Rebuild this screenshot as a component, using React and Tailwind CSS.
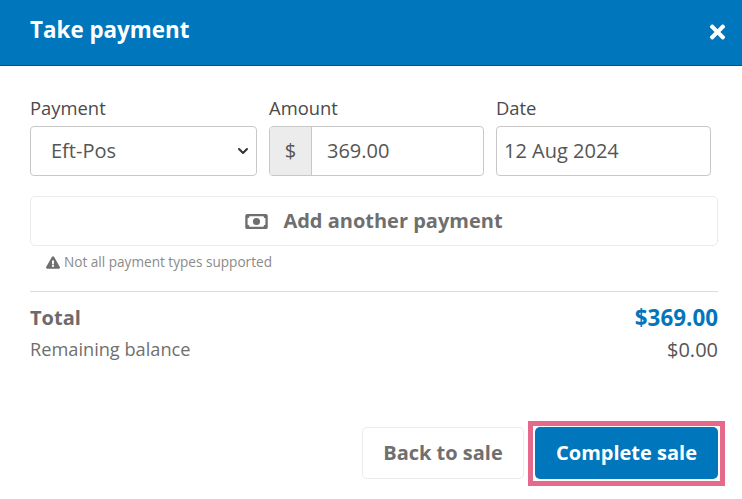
import React from 'react';
import { FaTimes, FaExclamationTriangle } from 'react-icons/fa';
import { HiChevronDown } from 'react-icons/hi';

const MoneyIcon = () => (
  <svg viewBox="0 0 24 16" className="w-[23px] h-[15px] text-[#6f6f6f]" fill="currentColor">
    <path fillRule="evenodd" d="M2 0h20a2 2 0 0 1 2 2v12a2 2 0 0 1-2 2H2a2 2 0 0 1-2-2V2a2 2 0 0 1 2-2zm2.500 2.500A2 2 0 0 1 2.500 4.500v7a2 2 0 0 1 2 2h15a2 2 0 0 1 2-2v-7a2 2 0 0 1-2-2h-15z" />
    <circle cx="12" cy="8" r="3.800" />
  </svg>
);

const App = () => {
  return (
    <div className="w-[742px] h-[499px] bg-white overflow-hidden font-['Open_Sans',sans-serif]">
      {/* Header */}
      <div className="h-[66px] bg-[#0076bd] border-b border-[#0a5080] pl-[30px] pr-[14px] flex items-start justify-between">
        <h1 className="mt-[13px] text-[22.4px] leading-[33px] font-bold text-white">Take payment</h1>
        <FaTimes className="mt-[21px] w-[21px] h-[22px] text-white" />
      </div>

      <div className="px-[24px] pl-[30px] pt-[30px]">
        {/* Fields */}
        <div className="flex gap-[12px]">
          <div className="w-[227px]">
            <label className="block h-[30px] text-[18.4px] leading-[24px] font-medium text-[#4a4a4a]">Payment</label>
            <div className="h-[50px] border border-[#c8c8c8] rounded-[4px] pl-[20px] pr-[3px] flex items-center justify-between text-[20px] text-[#555555]">
              <span>Eft-Pos</span>
              <HiChevronDown className="w-[20px] h-[20px] text-[#333333]" />
            </div>
          </div>
          <div className="w-[215px]">
            <label className="block h-[30px] text-[18.4px] leading-[24px] font-medium text-[#4a4a4a]">Amount</label>
            <div className="h-[50px] border border-[#c8c8c8] rounded-[4px] flex items-center text-[20px] text-[#555555] overflow-hidden">
              <span className="w-[42px] h-full bg-[#ececec] border-r border-[#c8c8c8] flex items-center justify-center">$</span>
              <span className="pl-[15px]">369.00</span>
            </div>
          </div>
          <div className="w-[215px]">
            <label className="block h-[30px] text-[18.4px] leading-[24px] font-medium text-[#4a4a4a]">Date</label>
            <div className="h-[50px] border border-[#c8c8c8] rounded-[4px] pl-[7px] flex items-center text-[20px] text-[#555555]">
              12 Aug 2024
            </div>
          </div>
        </div>

        {/* Add another payment */}
        <button className="mt-[20px] w-[688px] h-[50px] border border-[#ebebeb] rounded-[5px] flex items-center justify-center gap-[15px] text-[20px] font-bold text-[#6f6f6f]">
          <MoneyIcon />
          <span>Add another payment</span>
        </button>

        <div className="mt-[6px] ml-[16px] h-[20px] flex items-center gap-[4px] text-[13.6px] text-[#8a8a8a]">
          <FaExclamationTriangle className="w-[14px] h-[13px] text-[#6f6f6f]" />
          <span>Not all payment types supported</span>
        </div>

        <div className="mt-[19px] w-[688px] border-t border-[#dcdcdc]" />

        {/* Totals */}
        <div className="w-[688px] mt-[10px] flex items-center justify-between h-[32px]">
          <span className="text-[20px] font-bold text-[#6f6a6a]">Total</span>
          <span className="text-[22.4px] font-bold text-[#0076bd]">$369.00</span>
        </div>
        <div className="w-[688px] mt-[2px] flex items-center justify-between h-[28px]">
          <span className="text-[18.2px] text-[#6f6f6f]">Remaining balance</span>
          <span className="text-[20px] text-[#555555]">$0.00</span>
        </div>

        {/* Actions */}
        <div className="w-[688px] mt-[63px] flex justify-end gap-[11px]">
          <button className="w-[162px] h-[52px] border border-[#ebebeb] rounded-[5px] text-[20px] font-bold text-[#6f6f6f]">Back to sale</button>
          <div className="relative w-[183px] h-[52px]">
            <button className="w-full h-full bg-[#0076bd] rounded-[5px] text-[20px] font-bold text-white">Complete sale</button>
            <div className="absolute -left-[7px] -right-[7px] -top-[6px] -bottom-[7px] border-[5px] border-[#e4698a]" />
          </div>
        </div>
      </div>
    </div>
  );
};

export default App;
